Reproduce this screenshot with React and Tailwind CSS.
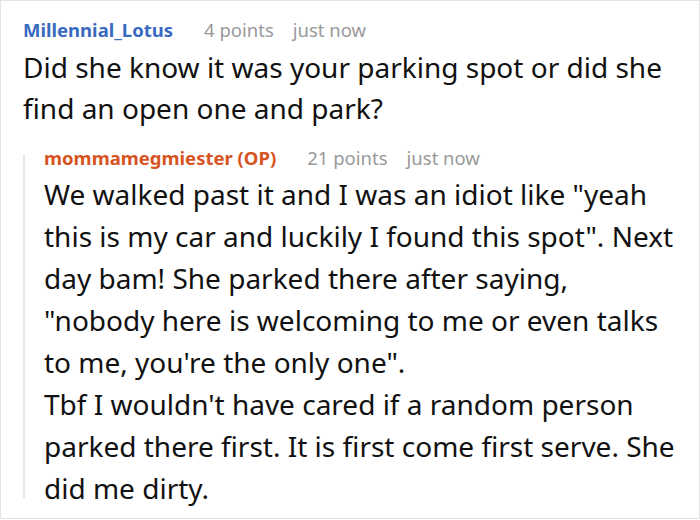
import React from 'react';

function Meta({ name, nameClass, points, time }) {
  return (
    <div className="flex items-baseline text-[18.5px] leading-[26px]">
      <span className={`font-bold ${nameClass}`}>{name}</span>
      <span className="ml-[31px] text-[#999999]">{points}</span>
      <span className="ml-[19px] text-[#999999]">{time}</span>
    </div>
  );
}

export default function App() {
  return (
    <div
      className="w-[700px] h-[519px] bg-white border border-[#e4e4e4] overflow-hidden"
      style={{ fontFamily: '"Noto Sans", "Open Sans", sans-serif' }}
    >
      <div className="pl-[22px] pr-[14px] pt-[16px]">
        <Meta name="Millennial_Lotus" nameClass="text-[#3a6ac0]" points="4 points" time="just now" />
        <p className="text-[28px] leading-[41px] text-[#111111] mt-[4px]">
          Did she know it was your parking spot or did she find an open one and park?
        </p>
        {/* reply thread */}
        <div className="flex mt-[16px]">
          <div className="w-[2px] shrink-0 bg-[#e6e6e6] mt-[9px] h-[344px]" />
          <div className="pl-[19px]">
            <Meta name="mommamegmiester (OP)" nameClass="text-[#d6541f]" points="21 points" time="just now" />
            <p className="text-[28px] leading-[42px] text-[#111111] mt-[2px]">
              We walked past it and I was an idiot like "yeah this is my car and luckily I found this spot". Next day bam! She parked there after saying, "nobody here is welcoming to me or even talks to me, you're the only one".
              <br />
              Tbf I wouldn't have cared if a random person parked there first. It is first come first serve. She did me dirty.
            </p>
          </div>
        </div>
      </div>
    </div>
  );
}
